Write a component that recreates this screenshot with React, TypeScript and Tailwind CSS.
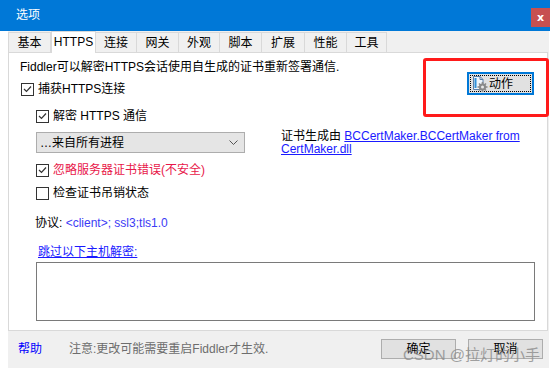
import React from "react";

const font = "font-['Liberation_Sans','Noto_Sans_CJK_SC',sans-serif]";

function Check({ checked }: { checked?: boolean }) {
  return (
    <span className="w-[13px] h-[13px] border border-[#333] bg-white flex items-center justify-center shrink-0">
      {checked && (
        <svg width="9" height="8" viewBox="0 0 9 8">
          <path d="M1 4 L3.5 6.5 L8 1.5" fill="none" stroke="#333" strokeWidth="1.2" />
        </svg>
      )}
    </span>
  );
}

function Row({ checked, children, className = "" }: { checked?: boolean; children: React.ReactNode; className?: string }) {
  return (
    <div className={`flex items-center gap-[4px] h-[16px] leading-[16px] ${className}`}>
      <Check checked={checked} />
      <span>{children}</span>
    </div>
  );
}

const tabs = [
  { name: "基本", w: "w-[43px]" },
  { name: "HTTPS", w: "w-[45px]", active: true },
  { name: "连接", w: "w-[41px]" },
  { name: "网关", w: "w-[42px]" },
  { name: "外观", w: "w-[41px]" },
  { name: "脚本", w: "w-[42px]" },
  { name: "扩展", w: "w-[43px]" },
  { name: "性能", w: "w-[42px]" },
  { name: "工具", w: "w-[40px]" },
];

function DocGearIcon() {
  return (
    <svg width="16" height="17" viewBox="0 0 16 17">
      <path d="M1.5 1.5 H8 L11 4.5 V14.5 H1.5 Z" fill="#eef4fb" stroke="#5a7fa8" />
      <path d="M8 1.5 V4.5 H11" fill="none" stroke="#5a7fa8" />
      <rect x="2.5" y="3" width="2" height="10" fill="#2f8fd8" />
      <g transform="translate(10.5 12)">
        <circle r="3.6" fill="#8a8a8a" />
        <g stroke="#8a8a8a" strokeWidth="1.6">
          <line x1="0" y1="-5" x2="0" y2="5" />
          <line x1="-5" y1="0" x2="5" y2="0" />
          <line x1="-3.5" y1="-3.5" x2="3.5" y2="3.5" />
          <line x1="-3.5" y1="3.5" x2="3.5" y2="-3.5" />
        </g>
        <circle r="1.5" fill="#e8e8e8" />
      </g>
    </svg>
  );
}

export default function App() {
  return (
    <div className={`w-[558px] h-[376px] bg-white relative overflow-hidden text-[12px] text-black ${font}`}>
      {/* title bar */}
      <div className="w-[550px] h-[31px] bg-[#0078d7] flex items-start justify-between">
        <span className="text-white text-[12px] leading-[16px] pl-4 pt-[7px]">选项</span>
        <div className="mt-[8px] w-[19px] h-[19px] bg-[#c75050] flex items-center justify-center text-white text-[11px] font-bold leading-none font-['DejaVu_Sans',sans-serif]">
          x
        </div>
      </div>

      <div className="ml-2 w-[541px] h-[337px] bg-[#f0f0f0] flex flex-col">
        {/* tabs */}
        <div className="h-[21px] flex items-end relative z-10">
          {tabs.map((t) =>
            t.active ? (
              <div
                key={t.name}
                className={`${t.w} h-[22px] -mb-[1px] bg-white border border-b-0 border-[#d9d9d9] flex items-start justify-center pt-[2px] leading-[16px]`}
              >
                {t.name}
              </div>
            ) : (
              <div
                key={t.name}
                className={`${t.w} h-[20px] bg-[#f0f0f0] border border-b-0 border-l-0 first:border-l border-[#d9d9d9] flex items-center justify-center leading-[16px]`}
              >
                {t.name}
              </div>
            )
          )}
        </div>

        {/* panel */}
        <div className="w-[540px] h-[279px] bg-white border border-[#d9d9d9] flex flex-col">
          <div className="pl-[11px] pt-[6px] h-[22px] leading-[16px]">
            Fiddler可以解密HTTPS会话使用自生成的证书重新签署通信.
          </div>

          <div className="flex">
            <div className="w-[272px] flex flex-col pt-[6px]">
              <Row checked className="ml-[12px]">捕获HTTPS连接</Row>
              <Row checked className="ml-[27px] mt-[11px]">解密 HTTPS 通信</Row>
              <div className="ml-[27px] mt-[8px] w-[209px] h-[21px] bg-[#e5e5e5] border border-[#adadad] flex items-center justify-between pl-[3px] pr-[6px]">
                <span className="leading-[16px]">…来自所有进程</span>
                <svg width="9" height="6" viewBox="0 0 9 6">
                  <path d="M0.5 0.5 L4.5 4.5 L8.5 0.5" fill="none" stroke="#555" />
                </svg>
              </div>
              <Row checked className="ml-[27px] mt-[9px]">
                <span className="text-[#e8174a]">忽略服务器证书错误(不安全)</span>
              </Row>
              <Row className="ml-[27px] mt-[7px]">检查证书吊销状态</Row>
            </div>

            <div className="flex flex-col">
              <div className="ml-[186px] -mt-[3px] w-[67px] h-[23px] border-2 border-[#0078d7] bg-[#e1e1e1] p-[1px]">
                <div className="w-full h-full border border-dotted border-black flex items-center pl-[1px] gap-[1px]">
                  <DocGearIcon />
                  <span className="leading-[16px]">动作</span>
                </div>
              </div>
              <div className="mt-[35px] w-[250px] leading-[13px]">
                证书生成由{" "}
                <span className="text-[#1a1aff] underline">
                  BCCertMaker.BCCertMaker from
                  <br />
                  CertMaker.dll
                </span>
              </div>
            </div>
          </div>

          <div className="ml-[26px] mt-[14px] h-[16px] leading-[16px]">
            协议: <span className="text-[#3b3bf5]">&lt;client&gt;; ssl3;tls1.0</span>
          </div>
          <div className="ml-[29px] mt-[13px] h-[16px] leading-[16px] text-[#1a1aff] underline">
            跳过以下主机解密:
          </div>
          <div className="ml-[27px] mt-[2px] w-[499px] h-[59px] border border-[#7a7a7a] bg-white" />
        </div>

        {/* footer */}
        <div className="h-[36px] flex items-center pl-[10px] pr-[6px]">
          <span className="text-[#0000ff] leading-[16px]">帮助</span>
          <span className="ml-[27px] text-[#6d6d6d] leading-[16px]">注意:更改可能需要重启Fiddler才生效.</span>
          <div className="ml-auto flex gap-[12px]">
            <div className="w-[75px] h-[20px] bg-[#e1e1e1] border border-[#adadad] flex items-center justify-center leading-[16px]">
              确定
            </div>
            <div className="w-[75px] h-[20px] bg-[#e1e1e1] border border-[#adadad] flex items-center justify-center leading-[16px]">
              取消
            </div>
          </div>
        </div>
      </div>

      {/* red annotation box */}
      <div className="absolute left-[423px] top-[58px] w-[126px] h-[59px] border-[3px] border-[#ff1a1a] rounded-[3px]" />

      {/* watermark */}
      <div className="absolute left-[403px] top-[345px] text-[15px] leading-[20px] text-[#8c8c8c] opacity-80 whitespace-nowrap">
        CSDN @拉灯的小手
      </div>
    </div>
  );
}
